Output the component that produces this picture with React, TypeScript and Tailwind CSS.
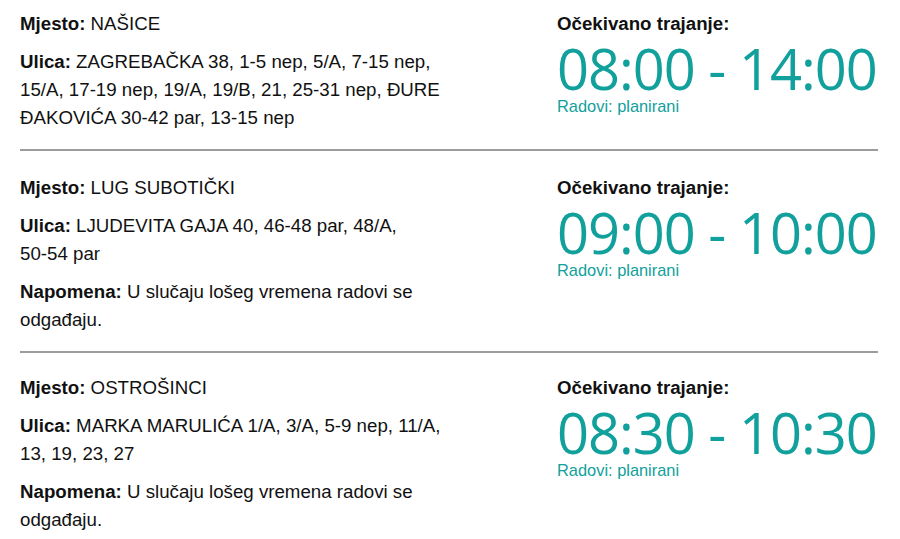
const rows = [
  {
    place: "NAŠICE",
    street:
      "ZAGREBAČKA 38, 1-5 nep, 5/A, 7-15 nep, 15/A, 17-19 nep, 19/A, 19/B, 21, 25-31 nep, ĐURE ĐAKOVIĆA 30-42 par, 13-15 nep",
    note: null as string | null,
    time: "08:00 - 14:00",
  },
  {
    place: "LUG SUBOTIČKI",
    street: "LJUDEVITA GAJA 40, 46-48 par, 48/A, 50-54 par",
    note: "U slučaju lošeg vremena radovi se odgađaju.",
    time: "09:00 - 10:00",
  },
  {
    place: "OSTROŠINCI",
    street: "MARKA MARULIĆA 1/A, 3/A, 5-9 nep, 11/A, 13, 19, 23, 27",
    note: "U slučaju lošeg vremena radovi se odgađaju.",
    time: "08:30 - 10:30",
  },
];

// keep "1-5" style ranges on one line
function NoBreak({ text }: { text: string }) {
  const words = text.split(" ");
  return (
    <>
      {words.map((w, i) => (
        <span key={i}>
          <span className="whitespace-nowrap">{w}</span>
          {i < words.length - 1 ? " " : ""}
        </span>
      ))}
    </>
  );
}

export default function App() {
  return (
    <div className="w-[900px] h-[539px] overflow-hidden bg-white font-['Liberation_Sans',Arial,sans-serif] text-[#111]">
      <div className="ml-[20px] w-[858px] -mt-[11px]">
        {rows.map((row, i) => (
          <div
            key={i}
            className={`flex pb-[17px] ${i === 1 ? "pt-[23px]" : "pt-[21px]"} ${
              i < rows.length - 1 ? "border-b-2 border-[#9c9c9c]" : ""
            }`}
          >
            {/* Left: location details */}
            <div className="w-[424px] text-[18.7px] leading-[28px] flex flex-col gap-[10px]">
              <p>
                <b>Mjesto:</b> {row.place}
              </p>
              <p>
                <b>Ulica:</b> <NoBreak text={row.street} />
              </p>
              {row.note && (
                <p>
                  <b>Napomena:</b> {row.note}
                </p>
              )}
            </div>

            {/* Right: duration */}
            <div className="ml-[113px]">
              <p className="text-[18.7px] leading-[28px] font-bold">Očekivano trajanje:</p>
              <p className="font-['Open_Sans',sans-serif] text-[56px] leading-[60px] tracking-[-1px] text-[#11a09c]">
                {row.time}
              </p>
              <p className="-mt-[2px] text-[16.4px] leading-[20px] text-[#11a09c]">Radovi: planirani</p>
            </div>
          </div>
        ))}
      </div>
    </div>
  );
}
